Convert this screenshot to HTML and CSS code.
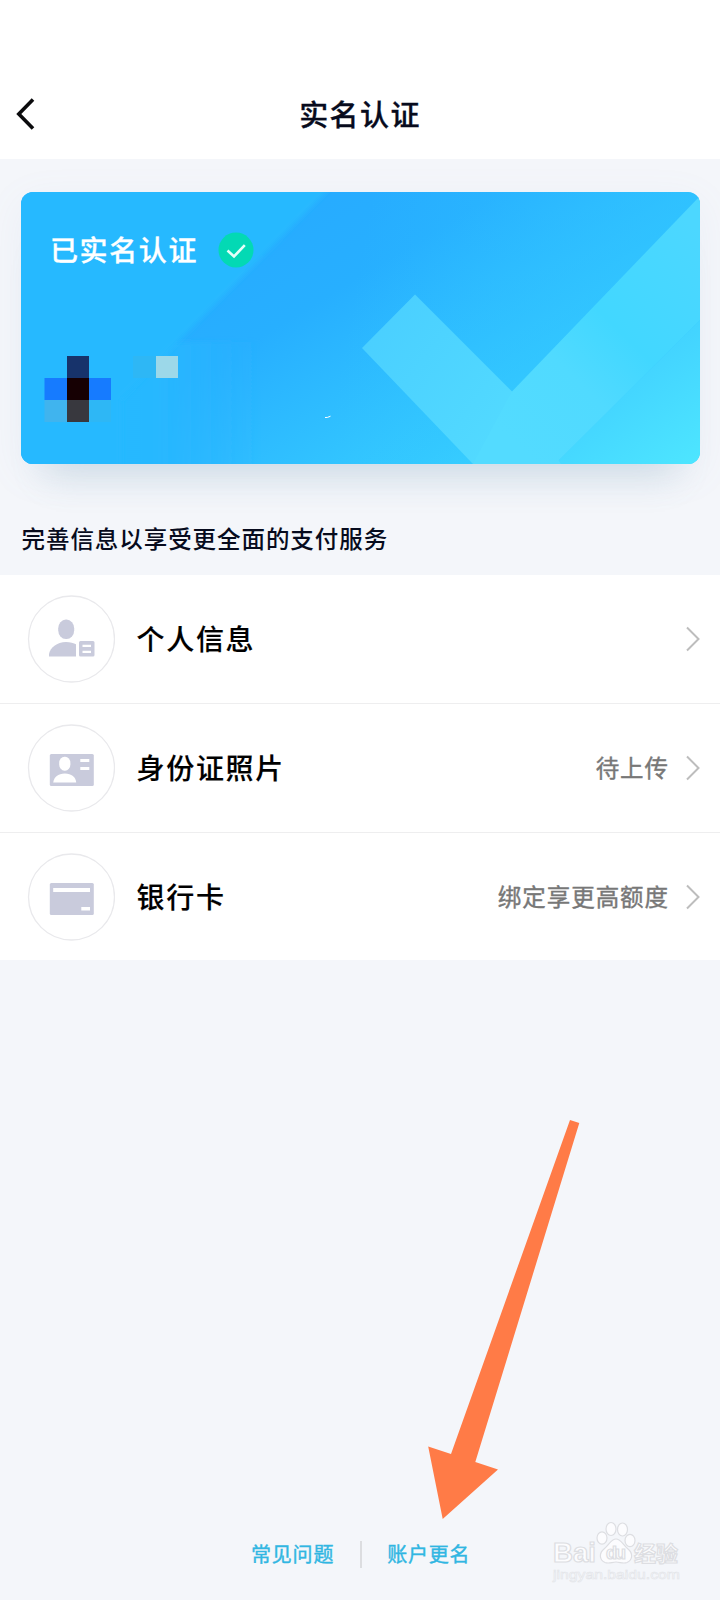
FILE: index.html
```html
<!DOCTYPE html>
<html lang="zh-CN">
<head>
<meta charset="utf-8">
<title>实名认证</title>
<link rel="stylesheet" href="styles.css">
</head>
<body>
<main class="page">
  <header class="header">
    <svg class="back" width="24" height="34" viewBox="0 0 24 34"><path d="M21 2.500 6.800 17 21 31.500" fill="none" stroke="#0b0b0d" stroke-width="3.600"/></svg>
    <h1 class="title">实名认证</h1>
  </header>

  <section class="card">
    <svg class="card-art" width="679" height="272" viewBox="0 0 679 272">
      <defs>
        <linearGradient id="base" gradientUnits="userSpaceOnUse" x1="230" y1="20" x2="460" y2="400">
          <stop offset="0" stop-color="#27abff"/><stop offset=".25" stop-color="#27afff"/><stop offset=".68" stop-color="#35caff"/><stop offset="1" stop-color="#4be5ff"/>
        </linearGradient>
        <linearGradient id="wash" gradientUnits="userSpaceOnUse" x1="350" y1="0" x2="679" y2="60">
          <stop offset="0" stop-color="#30c4ff" stop-opacity="0"/><stop offset="1" stop-color="#30c4ff"/>
        </linearGradient>
        <linearGradient id="low" gradientUnits="userSpaceOnUse" x1="60" y1="0" x2="240" y2="0">
          <stop offset="0" stop-color="#27b9ff"/><stop offset=".4" stop-color="#27b8ff"/><stop offset="1" stop-color="#29b5ff" stop-opacity="0"/>
        </linearGradient>
        <linearGradient id="tick" gradientUnits="userSpaceOnUse" x1="370" y1="100" x2="560" y2="240">
          <stop offset="0" stop-color="#4acfff"/><stop offset=".85" stop-color="#53dbff"/>
        </linearGradient>
        <linearGradient id="arm" gradientUnits="userSpaceOnUse" x1="480" y1="240" x2="679" y2="40">
          <stop offset="0" stop-color="#53dbff"/><stop offset=".32" stop-color="#50daff"/><stop offset=".55" stop-color="#42d7ff"/><stop offset="1" stop-color="#4cd7ff"/>
        </linearGradient>
        <linearGradient id="corner" gradientUnits="userSpaceOnUse" x1="590" y1="160" x2="670" y2="272">
          <stop offset="0" stop-color="#40cfff"/><stop offset="1" stop-color="#4de5ff"/>
        </linearGradient>
        <filter id="soft" x="-10%" y="-10%" width="120%" height="120%"><feGaussianBlur stdDeviation="2.500"/></filter>
      </defs>
      <rect width="679" height="272" fill="url(#base)"/>
      <rect width="679" height="272" fill="url(#wash)" opacity=".6"/>
      <path d="M-20 150H240V292H-20Z" fill="url(#low)" filter="url(#soft)"/>
      <path d="M-20 -20H325L157 150 100 208V292H-20Z" fill="#27b9ff" filter="url(#soft)"/>
      <path d="M534 272 679 128V272Z" fill="url(#corner)"/>
      <path d="M341 156 394 102.500 491 199.500 540 272H452Z" fill="url(#tick)"/>
      <path d="M491 199.500 679 4V128L534 272H452Z" fill="url(#arm)"/>
      <path d="M304 225.500Q306 226 309.500 224.200" fill="none" stroke="#fff"/>
      <path d="M46 164H68V186H46Z" fill="#17336b"/>
      <path d="M23.500 186H90V208H23.500Z" fill="#167bff"/>
      <path d="M46 186H68V208H46Z" fill="#160003"/>
      <path d="M23.500 208H46V230H23.500Z" fill="#40b4ee"/>
      <path d="M46 208H68V230H46Z" fill="#38383e"/>
      <path d="M68 208H90V230H68ZM112 164H135V186H112Z" fill="#2eb7f5"/>
      <path d="M135 164H157V186H135Z" fill="#9cd8e9"/>
    </svg>
    <div class="card-head">
      <span class="card-title">已实名认证</span>
      <svg width="36" height="36" viewBox="0 0 36 36"><circle cx="18" cy="18" r="17.500" fill="#03d9b4"/><path d="M9.500 18.500 16 24.500 26.800 13.200" fill="none" stroke="#e4fff9" stroke-width="2.600"/></svg>
    </div>
  </section>

  <h2 class="section-title">完善信息以享受更全面的支付服务</h2>

  <ul class="list">
    <li class="row">
      <svg class="icon" width="88" height="88" viewBox="0 0 88 88"><circle class="ring" cx="44.500" cy="44" r="43"/><rect x="31.200" y="24.600" width="16" height="19.400" rx="7.700" ry="8.700"/><path d="M22 61.500V59C23 53 30 47 39 47 43 47 47 48 49 49.300V61.500Z"/><path fill-rule="evenodd" d="M53.500 46H66Q67.500 46 67.500 47.500V60Q67.500 61.500 66 61.500H53.500Q52 61.500 52 60V47.500Q52 46 53.500 46ZM55.500 49.700V51.900H64V49.700ZM55.500 55.700V58H64V55.700Z"/></svg>
      <span class="name">个人信息</span>
      <svg class="chevron" width="14" height="26" viewBox="0 0 14 26"><path d="M1 1.500 12.500 13 1 24.500"/></svg>
    </li>
    <li class="row">
      <svg class="icon" width="88" height="88" viewBox="0 0 88 88"><circle class="ring" cx="44.500" cy="44" r="43"/><rect x="22.800" y="30" width="44" height="32" rx="1.500"/><g fill="#fff"><rect x="32.200" y="32.700" width="11.200" height="14" rx="5.300" ry="6.300"/><path d="M26.200 58.500C27 53 31 49.500 37.800 49.500S48.700 53 49.200 58.500Z"/><path d="M53.300 35H62.300V38H53.300ZM53.300 43H62.300V46H53.300Z"/></g></svg>
      <span class="name">身份证照片</span>
      <span class="note">待上传</span>
      <svg class="chevron" width="14" height="26" viewBox="0 0 14 26"><path d="M1 1.500 12.500 13 1 24.500"/></svg>
    </li>
    <li class="row">
      <svg class="icon" width="88" height="88" viewBox="0 0 88 88"><circle class="ring" cx="44.500" cy="44" r="43"/><rect x="22.800" y="30" width="44" height="32" rx="1.500"/><path d="M26.200 35H63V39H26.200ZM54.300 54H63V57.500H54.300Z" fill="#fff"/></svg>
      <span class="name">银行卡</span>
      <span class="note">绑定享更高额度</span>
      <svg class="chevron" width="14" height="26" viewBox="0 0 14 26"><path d="M1 1.500 12.500 13 1 24.500"/></svg>
    </li>
  </ul>

  <footer class="footer">
    <a class="link">常见问题</a>
    <span class="divider"></span>
    <a class="link">账户更名</a>
  </footer>

  <svg class="arrow" width="72" height="400" viewBox="0 0 72 400"><path d="M142 0 151.300 3 47.300 342 70 349.500 14.700 399 .2 326.500 23 334Z" fill="#ff7b47"/></svg>

  <svg class="watermark" width="144" height="72" viewBox="0 0 144 72">
    <g fill="#fcfcfe" stroke="#dddee2" stroke-width="1.200">
      <text class="wm-logo" x="4" y="41.500" textLength="43" lengthAdjust="spacingAndGlyphs">Bai</text>
      <ellipse cx="53" cy="18" rx="5" ry="6.200"/><ellipse cx="62" cy="9" rx="5" ry="6.500"/><ellipse cx="73.500" cy="9.500" rx="5" ry="6.500"/><ellipse cx="81" cy="20.500" rx="5" ry="6.200"/>
      <path d="M67 19C72 19 74 25 79 29 84 33 84 40 78 42.500 74 44 71 42 67 42S60 44 56 42.500C50 40 50 33 55 29 60 25 62 19 67 19Z"/>
      <text class="wm-du" x="57" y="38.500" textLength="20">du</text>
      <text class="wm-cn" x="85" y="40.500" textLength="44" lengthAdjust="spacingAndGlyphs">经验</text>
    </g>
    <text class="wm-url" x="4" y="59" textLength="127" lengthAdjust="spacingAndGlyphs">jingyan.baidu.com</text>
  </svg>
</main>
</body>
</html>
```
FILE: styles.css
```css
* { box-sizing: border-box; }
body {
  margin: 0;
  background: #f4f6fa;
  font-family: "Noto Sans CJK SC", sans-serif;
  color: #070b1d;
}
.page {
  position: relative;
  width: 720px;
  height: 1600px;
  overflow: hidden;
  display: flex;
  flex-direction: column;
}
.header {
  height: 159px;
  flex: none;
  padding: 71px 12px 0;
  background: #fff;
  display: grid;
  grid-template-columns: 24px 1fr 24px;
  align-items: start;
}
.back { margin-top: 26px; }
.title {
  margin: 20px 0 0;
  font-size: 29px;
  line-height: 44px;
  font-weight: 500;
  letter-spacing: 1.4px;
  text-align: center;
  -webkit-text-stroke: .3px #070b1d;
}
.card {
  position: relative;
  flex: none;
  width: 679px;
  height: 272px;
  margin: 33px 0 0 21px;
  border-radius: 12px;
  box-shadow: 0 38px 34px -26px rgba(110, 155, 175, .24), 0 10px 40px rgba(130, 150, 200, .08);
}
.card-art {
  position: absolute;
  inset: 0;
  border-radius: 12px;
}
.card-head {
  position: relative;
  display: flex;
  align-items: center;
  padding: 35px 0 0 29px;
  gap: 20px;
  height: 80px;
}
.card-title {
  padding-bottom: 1px;
  color: #fff;
  font-size: 28px;
  line-height: 44px;
  font-weight: 500;
  letter-spacing: 1.6px;
  -webkit-text-stroke: .3px #fff;
}
.section-title {
  margin: 56px 0 0 21.5px;
  height: 55px;
  font-size: 23.5px;
  line-height: 36px;
  font-weight: 500;
  letter-spacing: .94px;
  white-space: nowrap;
}
.list {
  list-style: none;
  margin: 0;
  padding: 0;
  background: #fff;
}
.row {
  height: 129px;
  padding: 0 20px 0 27px;
  display: flex;
  align-items: center;
  border-bottom: 1px solid #eeeeef;
}
.row:last-child { height: 127px; border: 0; }
.icon { fill: #c9cbdc; flex: none; }
.ring { fill: #fff; stroke: #e9e9ec; stroke-width: 1.3; }
.name {
  flex: 1;
  margin-left: 21.5px;
  padding-bottom: 2px;
  color: #000;
  font-size: 28px;
  font-weight: 500;
  letter-spacing: 1.7px;
  -webkit-text-stroke: .15px #000;
}
.note {
  margin-right: 17px;
  padding-bottom: 2px;
  color: #777;
  font-size: 23.5px;
  letter-spacing: .95px;
  -webkit-text-stroke: .4px #777;
}
.chevron {
  fill: none;
  stroke: #bdbdbd;
  stroke-width: 2;
}
.footer {
  margin-top: auto;
  height: 92px;
  padding: 18px 0 0 251px;
  display: flex;
  align-items: flex-start;
}
.link {
  color: #31b6e2;
  font-size: 20px;
  line-height: 56px;
  letter-spacing: .8px;
  height: 56px;
  -webkit-text-stroke: .4px #31b6e2;
}
.divider {
  width: 2px;
  height: 27px;
  margin: 15px 25px 0 26px;
  background: #dcdde0;
}
.arrow {
  position: absolute;
  left: 428px;
  top: 1120px;
  overflow: visible;
}
.watermark {
  position: absolute;
  left: 549px;
  top: 1520px;
}
.wm-logo, .wm-du {
  font-family: "Liberation Sans", sans-serif;
  font-weight: 700;
}
.wm-logo { font-size: 27px; }
.wm-du { font-size: 18px; }
.wm-cn { font-size: 21px; font-weight: 700; }
.wm-url {
  font-family: "Liberation Sans", sans-serif;
  font-size: 13.5px;
  fill: #fafbfd;
  stroke: #e2e4e8;
  stroke-width: .6px;
}
```
